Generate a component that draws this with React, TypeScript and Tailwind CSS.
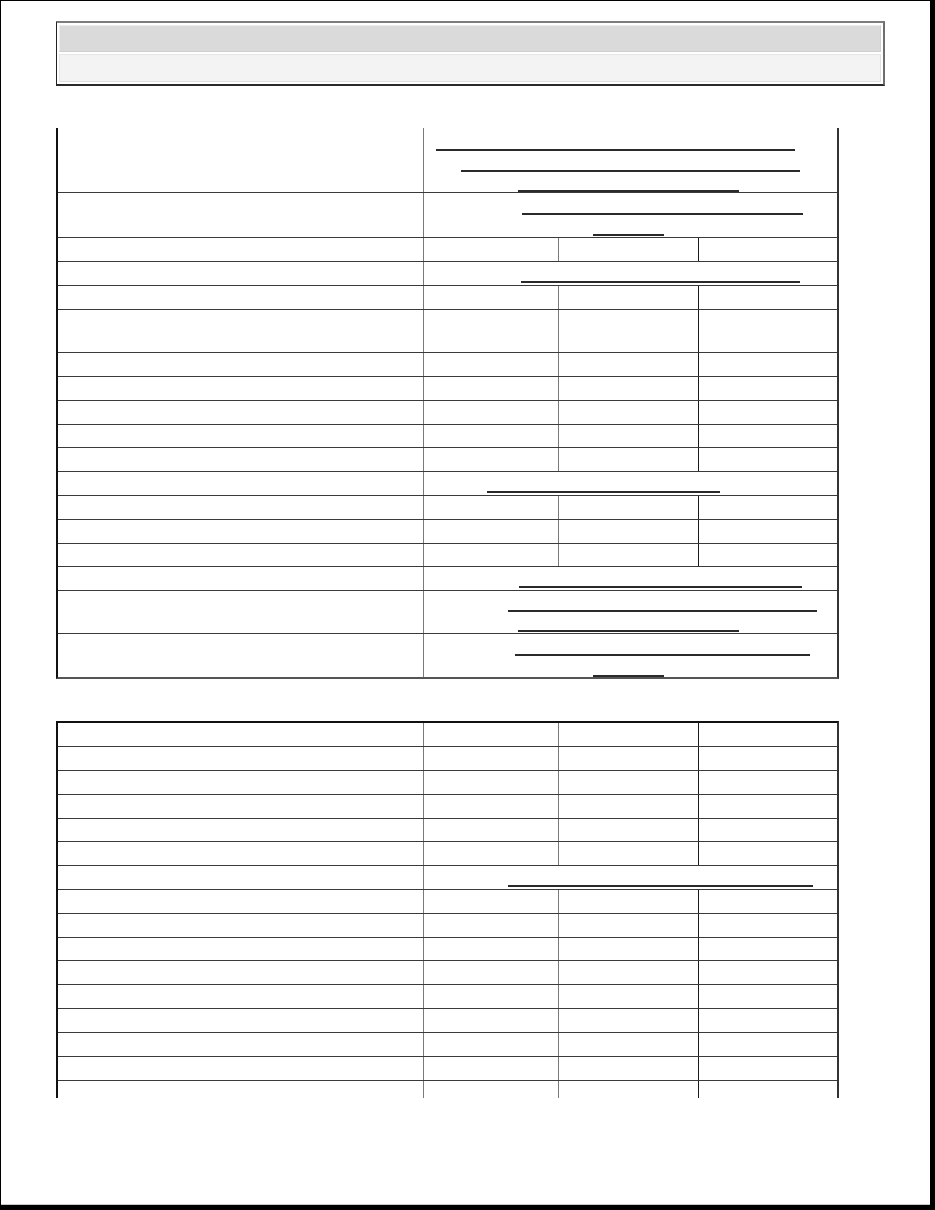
import React from "react";

type RowProps = { h: string; children?: React.ReactNode; last?: boolean };

function SplitRow({ h, last }: RowProps) {
  return (
    <div className={`flex ${h} ${last ? "" : "border-b border-[#3a3a3a]"}`}>
      <div className="w-[366px] shrink-0 border-r border-[#7a7a7a]" />
      <div className="w-[135px] shrink-0 border-r border-[#7a7a7a]" />
      <div className="w-[140px] shrink-0 border-r border-[#1a1a1a]" />
      <div className="flex-1" />
    </div>
  );
}

function MergedRow({ h, children, last }: RowProps) {
  return (
    <div className={`flex ${h} ${last ? "" : "border-b border-[#3a3a3a]"}`}>
      <div className="w-[366px] shrink-0 border-r border-[#7a7a7a]" />
      <div className="flex flex-1 flex-col">{children}</div>
    </div>
  );
}

export default function App() {
  return (
    <div className="box-border h-[1210px] w-[935px] overflow-hidden border-t border-l border-r-[5px] border-b-[5px] border-t-black border-l-black border-r-black border-b-black bg-white font-['Liberation_Sans',Arial,sans-serif]">
      <div className="flex h-full flex-col border-b border-[#c8c8c8] pl-[55px]">
        {/* header box */}
        <div className="mt-[20px] box-border flex h-[65px] w-[829px] flex-col gap-[2px] border-t-2 border-r-2 border-b-2 border-l border-t-[#7c7c7c] border-r-[#6e6e6e] border-b-[#2a2a2a] border-l-[#222] p-[2px]">
          <div className="h-[27px] border border-t-[#ececec] border-l-[#ececec] border-r-[#cfcfcf] border-b-[#cfcfcf] bg-[#dadada]" />
          <div className="h-[28px] border border-t-[#e6e6e6] border-l-[#e6e6e6] border-r-[#e0e0e0] border-b-[#e0e0e0] bg-[#f3f3f3]" />
        </div>

        {/* table 1 */}
        <div className="mt-[42px] box-border w-[783px] border-l-2 border-r-2 border-b-2 border-l-[#111] border-r-[#333] border-b-[#555]">
          <MergedRow h="h-[65px]">
            <div className="mt-[21px] ml-[12px] h-[2px] w-[359px] bg-[#2a2a2a]" />
            <div className="mt-[19px] ml-[37px] h-[2px] w-[339px] bg-[#2a2a2a]" />
            <div className="mt-[18px] ml-[94px] h-[2px] w-[221px] bg-[#2a2a2a]" />
          </MergedRow>
          <MergedRow h="h-[45px]">
            <div className="mt-[20px] ml-[98px] h-[2px] w-[281px] bg-[#2a2a2a]" />
            <div className="mt-[19px] ml-[169px] h-[2px] w-[71px] bg-[#2a2a2a]" />
          </MergedRow>
          <SplitRow h="h-[24px]" />
          <MergedRow h="h-[24px]">
            <div className="mt-[19px] ml-[97px] h-[2px] w-[279px] bg-[#2a2a2a]" />
          </MergedRow>
          <SplitRow h="h-[24px]" />
          <SplitRow h="h-[43px]" />
          <SplitRow h="h-[24px]" />
          <SplitRow h="h-[24px]" />
          <SplitRow h="h-[24px]" />
          <SplitRow h="h-[23px]" />
          <SplitRow h="h-[24px]" />
          <MergedRow h="h-[24px]">
            <div className="mt-[19px] ml-[63px] h-[2px] w-[233px] bg-[#2a2a2a]" />
          </MergedRow>
          <SplitRow h="h-[24px]" />
          <SplitRow h="h-[24px]" />
          <SplitRow h="h-[23px]" />
          <MergedRow h="h-[24px]">
            <div className="mt-[19px] ml-[95px] h-[2px] w-[283px] bg-[#2a2a2a]" />
          </MergedRow>
          <MergedRow h="h-[43px]">
            <div className="mt-[19px] ml-[84px] h-[2px] w-[309px] bg-[#2a2a2a]" />
            <div className="mt-[18px] ml-[94px] h-[2px] w-[221px] bg-[#2a2a2a]" />
          </MergedRow>
          <MergedRow h="h-[43px]" last>
            <div className="mt-[20px] ml-[91px] h-[2px] w-[295px] bg-[#2a2a2a]" />
            <div className="mt-[19px] ml-[169px] h-[2px] w-[71px] bg-[#2a2a2a]" />
          </MergedRow>
        </div>

        {/* table 2 */}
        <div className="mt-[42px] box-border w-[783px] border-t-2 border-l-2 border-r-2 border-t-[#111] border-l-[#111] border-r-[#333]">
          <SplitRow h="h-[24px]" />
          <SplitRow h="h-[24px]" />
          <SplitRow h="h-[24px]" />
          <SplitRow h="h-[24px]" />
          <SplitRow h="h-[23px]" />
          <SplitRow h="h-[24px]" />
          <MergedRow h="h-[24px]">
            <div className="mt-[19px] ml-[84px] h-[2px] w-[305px] bg-[#2a2a2a]" />
          </MergedRow>
          <SplitRow h="h-[24px]" />
          <SplitRow h="h-[24px]" />
          <SplitRow h="h-[23px]" />
          <SplitRow h="h-[24px]" />
          <SplitRow h="h-[24px]" />
          <SplitRow h="h-[24px]" />
          <SplitRow h="h-[24px]" />
          <SplitRow h="h-[24px]" />
          <SplitRow h="h-[17px]" last />
        </div>
      </div>
    </div>
  );
}
